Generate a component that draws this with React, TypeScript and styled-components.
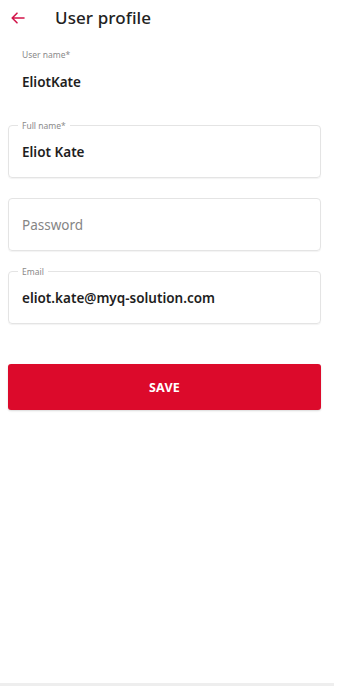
import React from "react";
import styled, { createGlobalStyle } from "styled-components";

const Global = createGlobalStyle`
  html, body { margin: 0; padding: 0; background: #ffffff; }
  body { font-family: "Noto Sans", "Open Sans", sans-serif; }
  * { box-sizing: border-box; }
`;

const Page = styled.div`
  width: 342px;
  height: 691px;
  display: flex;
  flex-direction: column;
  background: #fff;
  position: relative;
`;

const Header = styled.div`
  height: 35px;
  display: flex;
  align-items: center;
  padding-left: 10px;
`;

const BackButton = styled.button`
  width: 16px;
  height: 16px;
  padding: 0;
  border: none;
  background: none;
  display: flex;
  align-items: center;
  justify-content: center;
  color: #d2154a;
`;

const Title = styled.h1`
  margin: 0 0 0 29px;
  font-size: 17px;
  font-weight: 500;
  color: #222;
  letter-spacing: 0.1px;
`;

const Form = styled.div`
  display: flex;
  flex-direction: column;
  padding: 0 21px 0 8px;
`;

const Static = styled.div`
  display: flex;
  flex-direction: column;
  padding: 14px 0 0 14px;
  height: 90px;
`;

const StaticLabel = styled.span`
  font-size: 8.5px;
  color: #8a8a8a;
  line-height: 11px;
`;

const StaticValue = styled.span`
  margin-top: 13px;
  font-size: 13.5px;
  font-weight: 600;
  color: #1e1e1e;
`;

const Field = styled.div<{ $gap: number }>`
  position: relative;
  height: 53px;
  border: 1px solid #e4e4e4;
  border-radius: 4px;
  box-shadow: 0 1px 1px rgba(0, 0, 0, 0.05);
  margin-bottom: ${(p) => p.$gap}px;
  display: flex;
  align-items: center;
  padding: 0 13px;
`;

const Notch = styled.span`
  position: absolute;
  top: -6px;
  left: 9px;
  padding: 0 4px;
  background: #fff;
  font-size: 8.5px;
  line-height: 11px;
  color: #8a8a8a;
`;

const Value = styled.span<{ $placeholder?: boolean }>`
  font-size: 13.5px;
  font-weight: ${(p) => (p.$placeholder ? 400 : 600)};
  color: ${(p) => (p.$placeholder ? "#858585" : "#1e1e1e")};
`;

const SaveButton = styled.button`
  margin-top: 40px;
  height: 46px;
  border: none;
  border-radius: 3px;
  background: #dc0a2b;
  color: #fff;
  font-family: inherit;
  font-size: 12.5px;
  font-weight: 700;
  letter-spacing: 0.2px;
  box-shadow: 0 1px 2px rgba(0, 0, 0, 0.15);
`;

const Spacer = styled.div`
  flex: 1;
`;

const BottomBar = styled.div`
  height: 8px;
  border-top: 3px solid #eeeeee;
  margin-right: 8px;
`;

export default function App() {
  return (
    <Page>
      <Global />
      <Header>
        <BackButton aria-label="Back">
          <svg width="14" height="12" viewBox="0 0 14 12" fill="none">
            <path
              d="M13 6H1.5M6 1.2L1.2 6L6 10.8"
              stroke="currentColor"
              strokeWidth="1.6"
              strokeLinecap="round"
              strokeLinejoin="round"
            />
          </svg>
        </BackButton>
        <Title>User profile</Title>
      </Header>
      <Form>
        <Static>
          <StaticLabel>User name*</StaticLabel>
          <StaticValue>EliotKate</StaticValue>
        </Static>
        <Field $gap={20}>
          <Notch>Full name*</Notch>
          <Value>Eliot Kate</Value>
        </Field>
        <Field $gap={20}>
          <Value $placeholder>Password</Value>
        </Field>
        <Field $gap={0}>
          <Notch>Email</Notch>
          <Value>eliot.kate@myq-solution.com</Value>
        </Field>
        <SaveButton>SAVE</SaveButton>
      </Form>
      <Spacer />
      <BottomBar />
    </Page>
  );
}
